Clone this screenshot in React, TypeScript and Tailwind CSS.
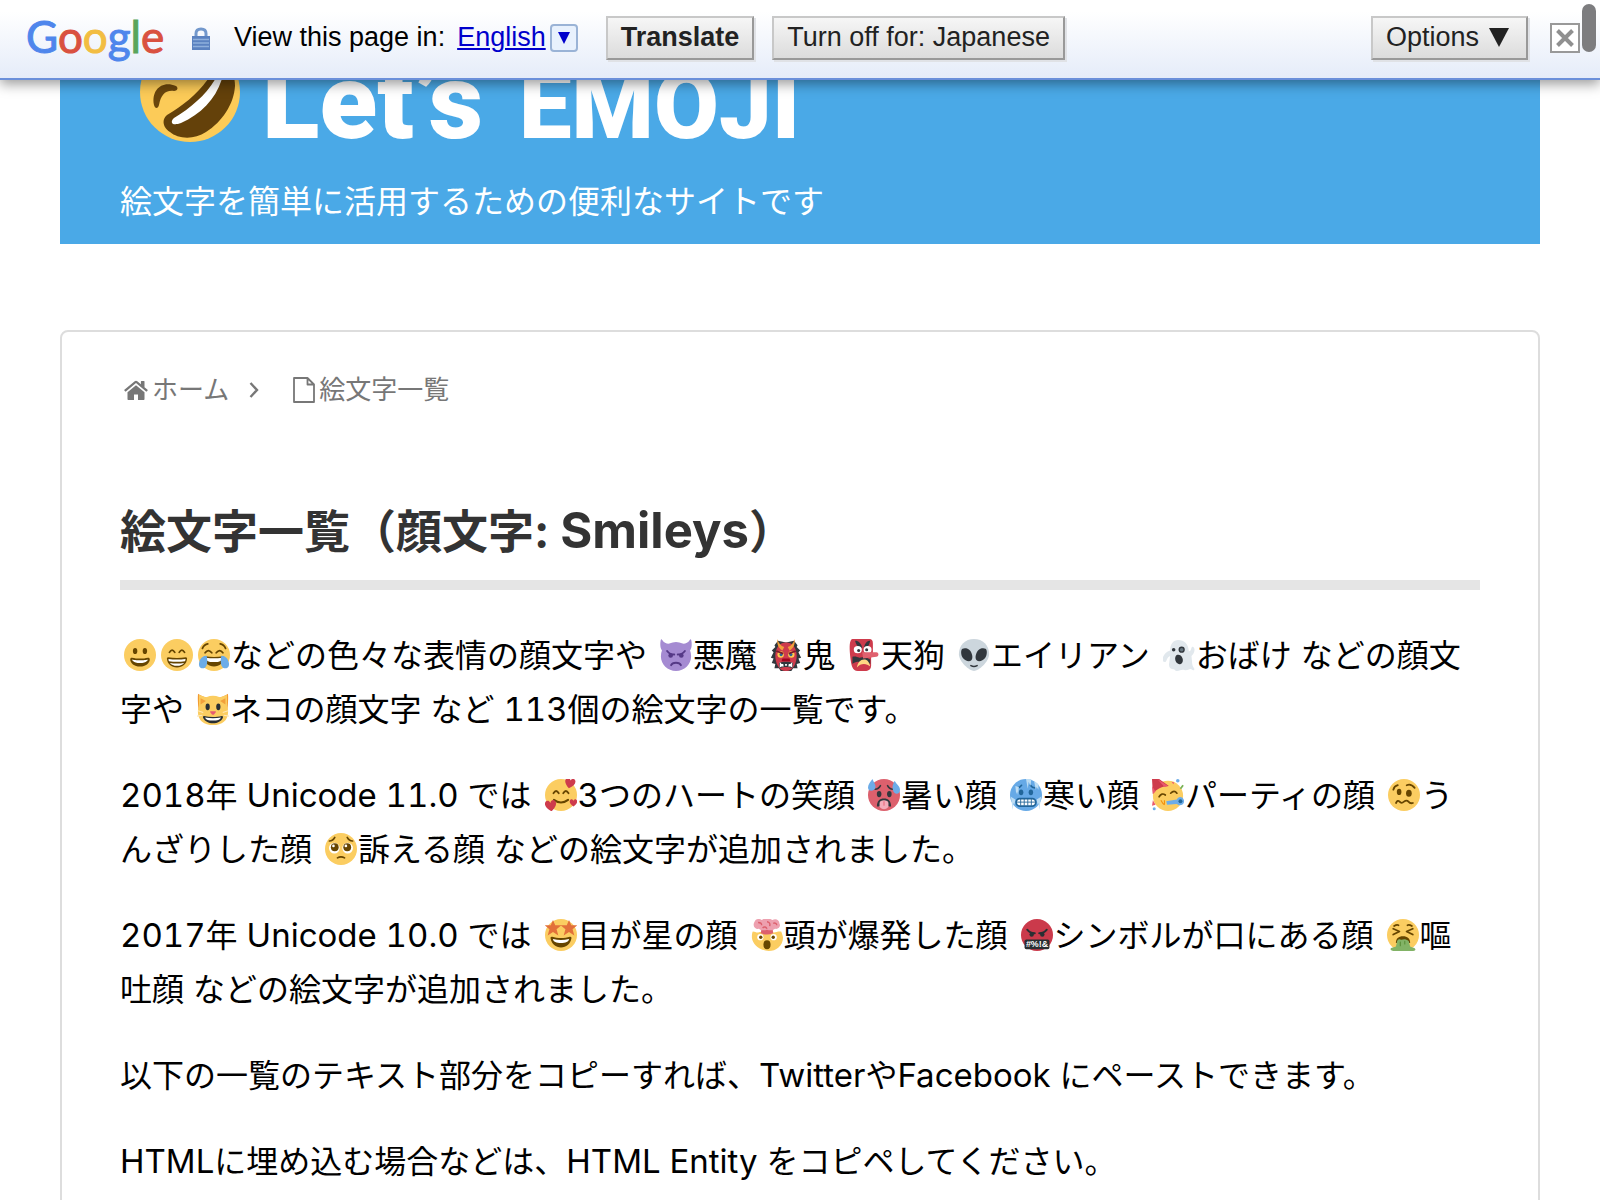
import type { ReactNode } from 'react';

function Emoji({ label, children }: { label: string; children: ReactNode }) {
  return (
    <svg viewBox="0 0 36 36" role="img" aria-label={label} className="ml-1 mr-px inline-block h-8 w-8 align-[-4px]">
      {children}
    </svg>
  );
}

function Latin({ children }: { children: ReactNode }) {
  return <span className="text-[33px] leading-none tabular-nums">{children}</span>;
}

const Y = '#FBCD61';
const B = '#664500';

const Disc = ({ fill = Y }: { fill?: string }) => <circle cx="18" cy="18" r="18" fill={fill} />;

const HappyEyes = ({ y = 14 }: { y?: number }) => (
  <g fill="none" stroke={B} strokeWidth="2" strokeLinecap="round">
    <path d={`M9.500 ${y + 2}q3-5 6 0`} />
    <path d={`M20.500 ${y + 2}q3-5 6 0`} />
  </g>
);

const Grinning = () => (
  <Emoji label="笑顔">
    <Disc />
    <ellipse cx="12.500" cy="13.500" rx="2.500" ry="3.500" fill={B} />
    <ellipse cx="23.500" cy="13.500" rx="2.500" ry="3.500" fill={B} />
    <path fill={B} d="M18 22c-3.600 0-6-.4-9-1-.7-.1-2 0-2 2 0 4 4.600 8 11 8s11-4 11-8c0-2-1.300-2.100-2-2-3 .6-5.400 1-9 1z" />
    <path fill="#fff" d="M9 23s3 1 9 1 9-1 9-1-1 4-9 4-9-4-9-4z" />
  </Emoji>
);

const Beaming = () => (
  <Emoji label="にやっと笑う顔">
    <Disc />
    <HappyEyes y={13} />
    <path fill={B} d="M28 20.500c-6 1-14 1-20 0-1 0-1.500.8-1.300 2C7.300 28 11.500 32 18 32s10.700-4 11.300-9.500c.2-1.200-.3-2-1.300-2z" />
    <path fill="#fff" d="M8.500 22.500c6 .8 13 .8 19 0 .3 1-.1 2-.6 2.500-6 .9-11.800.9-17.800 0-.5-.5-.9-1.500-.6-2.500zM10 27c5 .8 11 .8 16 0-1.600 2-4.400 3.200-8 3.200S11.600 29 10 27z" />
  </Emoji>
);

const Joy = () => (
  <Emoji label="嬉し泣きの顔">
    <Disc />
    <path fill="none" stroke={B} strokeWidth="2" strokeLinecap="round" d="M8 15.500q3.500-5 7.500 0M20.500 15.500q4-5 7.500 0M5 10.500q2-4.500 6-5M31 10.500q-2-4.500-6-5" />
    <path fill={B} d="M28 19.500c-6 1-14 1-20 0-1 0-1.500.8-1.300 2C7.300 27 11.500 31 18 31s10.700-4 11.300-9.500c.2-1.200-.3-2-1.300-2z" />
    <path fill="#fff" d="M9 21c6 1 12 1 18 0 .3 3-2 5-9 5s-9.300-2-9-5z" />
    <path fill="#6CACE8" d="M9.800 19C6 18.500 2 22 1.200 27c-.6 4 1.300 6 3.800 6 4.500 0 6.500-5 4.800-14zM26.200 19c3.800-.5 7.800 3 8.600 8 .6 4-1.300 6-3.800 6-4.500 0-6.500-5-4.800-14z" />
  </Emoji>
);

const Devil = () => (
  <Emoji label="悪魔">
    <path fill="#A58BD2" d="M35.300 2c-.2-1.600-1-2.200-1.800-1-2 3.200-5 4.500-8 4.200A18 18 0 0 0 10.500 5.200C7.500 5.500 4.500 4.200 2.500 1 1.700-.2.9.4.7 2-.2 7 .6 11 2.200 13A17 17 0 0 0 1 19.500C1 29 8.600 36 18 36s17-7 17-16.500a17 17 0 0 0-1.200-6.500c1.600-2 2.400-6 1.500-11z" />
    <path fill="none" stroke="#553986" strokeWidth="2.200" strokeLinecap="round" d="M8 13.500c2 2.500 5 4 8 4M28 13.500c-2 2.500-5 4-8 4M12.500 29.500c1.500-3.600 9.500-3.600 11 0" />
    <circle cx="12" cy="18.500" r="2.600" fill="#553986" />
    <circle cx="24" cy="18.500" r="2.600" fill="#553986" />
  </Emoji>
);

const Ogre = () => (
  <Emoji label="鬼">
    <path fill="#31373D" d="M9 2 5 7 6 9 2 13l2 2-3 6 3 1-2 5 4 1-1 5 5 0 2 3h12l2-3h5l-1-5 4-1-2-5 3-1-3-6 2-2-4-4 1-2-4-5-9 2z" />
    <path fill="#CE3B4C" d="M18 4C10 4 6 11 6 19c0 8 4 17 12 17s12-9 12-17c0-8-4-15-12-15z" />
    <path fill="#F2A03C" d="M8 0c0 6 1 10 6 13l2-4c-4-1-6-4-8-9zM28 0c0 6-1 10-6 13l-2-4c4-1 6-4 8-9z" />
    <circle cx="12" cy="17.500" r="3.600" fill="#FFCC4D" />
    <circle cx="24" cy="17.500" r="3.600" fill="#FFCC4D" />
    <circle cx="12.500" cy="17.500" r="1.800" fill="#2A6797" />
    <circle cx="23.500" cy="17.500" r="1.800" fill="#2A6797" />
    <path d="M7 13.500l8 3M29 13.500l-8 3" stroke="#7C1C2B" strokeWidth="2" />
    <path fill="#A0041E" d="M14 22h8l1 3H13z" />
    <path fill="#31373D" d="M10 27c4-2 12-2 16 0l-1 6c-4-2-10-2-14 0z" />
    <path fill="#fff" d="M11 32v-6l2 2h2v2h2v-2h2v2h2v-2h2l2-2v6l-2-1h-2l-1-1h-4l-1 1h-2z" />
  </Emoji>
);

const Tengu = () => (
  <Emoji label="天狗">
    <path fill="#CE3B4C" d="M5 0h19c3 0 4 2 4 5v11l-2 5v9c0 4-3 6-7 6H11C5 36 4 30 3 24 2 16 1 6 3 2c.5-1 1-2 2-2z" />
    <path fill="#31373D" d="M8 2c4 0 7 3 8 8-4 0-7-3-8-8zM25 2c-4 0-6 3-7 8 4 0 6-3 7-8zM5 20c3-1 5 0 8 1l6-1 6 3v5c-3-2-7-3-10 0-3-4-7-2-10 0z" />
    <ellipse cx="11" cy="12" rx="4.500" ry="4" fill="#fff" />
    <ellipse cx="22" cy="12" rx="4.500" ry="4" fill="#fff" />
    <circle cx="12" cy="13" r="1.700" fill="#31373D" />
    <circle cx="21" cy="12" r="1.700" fill="#31373D" />
    <path fill="#E0616F" d="M16 15l16 0c3 0 3 5 0 5l-15 2z" />
    <path fill="#FFD983" d="M10 32c1-6 4-9 8-9s6 3 7 8c-4-4-11-4-15 1z" />
  </Emoji>
);

const Alien = () => (
  <Emoji label="エイリアン">
    <path fill="#CCD6DD" d="M35 17c0 9-12 19-17 19S1 26 1 17C1 7 8 0 18 0s17 7 17 17z" />
    <path fill="#31373D" d="M13.500 13c3 4 3.500 9 1.500 11s-7 1-9.500-2.500S3 12 5 11s6-1 8.500 2zM22.500 13c-3 4-3.500 9-1.500 11s7 1 9.500-2.500S33 12 31 11s-6-1-8.500 2z" />
    <path d="M14.500 30q3.500 2 7 0" fill="none" stroke="#31373D" strokeWidth="1.800" strokeLinecap="round" />
  </Emoji>
);

const Ghost = () => (
  <Emoji label="おばけ">
    <path fill="#E1E8ED" d="M17 1c7 0 12 5 12 13l2-1c1-2 1-5 3-4 3 2 1 8-2 10 1 6 0 10 3 14 1 2-1 3-3 1-3-1-4 2-8 1-3-1-5 1-8 1s-2-2-5-2-5-3-4-7l1-8c-2 1-3 2-4 5-1 3-3 2-4 1-2-4 2-10 8-12C8 5 12 1 17 1z" />
    <circle cx="12" cy="12" r="2" fill="#31373D" />
    <circle cx="21" cy="12" r="3.500" fill="#31373D" />
    <circle cx="21" cy="12" r="2" fill="#66757F" />
    <ellipse cx="18" cy="23" rx="4.200" ry="5.500" fill="#31373D" transform="rotate(-20 18 23)" />
  </Emoji>
);

const Cat = () => (
  <Emoji label="ネコ">
    <path fill="#F18F26" d="M1.500 1C.5 0 1 16 2 19L14 6C9 5 4 3 1.500 1zM34.500 1C35.500 0 35 16 34 19L22 6c5-1 10-3 12.500-5z" />
    <path fill={Y} d="M18 3C8 3 1 10 1 21c0 10 7 15 17 15s17-5 17-15C35 10 28 3 18 3z" />
    <path fill={Y} d="M2 2v13L13 6zM34 2v13L23 6z" />
    <path fill="#F2A03C" d="M4 6v7l6-4zM32 6v7l-6-4z" />
    <ellipse cx="12" cy="15.500" rx="2.400" ry="3.800" fill="#292F33" />
    <ellipse cx="24" cy="15.500" rx="2.400" ry="3.800" fill="#292F33" />
    <path fill="#E75A70" d="M15 20.500h6c1 1-2 4-3 4s-4-3-3-4z" />
    <path fill="#292F33" d="M8 26c6 1.500 14 1.500 20 0 1.500 0 1.500 1 1 2-1.500 3.500-6 6-11 6S8.500 31.500 7 28c-.5-1-.5-2 1-2z" />
    <path fill="#fff" d="M9 27.500c6 1.200 12 1.200 18 0-1 2.500-4 3.500-9 3.500s-8-1-9-3.500z" />
    <path d="M1 20l6 2M0 26l6-1M35 20l-6 2M36 26l-6-1" stroke="#FEE7B8" strokeWidth="1.200" />
  </Emoji>
);

const Heart = ({ x, y, s }: { x: number; y: number; s: number }) => (
  <path transform={`translate(${x} ${y}) scale(${s})`} fill="#CE3B4C" d="M0 5C-4 2-6-1-5-3.500S-1-6 0-3C1-6 4-6 5-3.500S4 2 0 5z" />
);

const Hearts = () => (
  <Emoji label="3つのハートの笑顔">
    <Disc />
    <HappyEyes y={14} />
    <path fill="none" stroke={B} strokeWidth="2.200" strokeLinecap="round" d="M10 23.500q8 6 16 0" />
    <g transform="rotate(12 28 5)"><Heart x={28} y={5} s={1.1} /></g>
    <g transform="rotate(-8 6 30)"><Heart x={6.5} y={30.5} s={1.2} /></g>
    <Heart x={32} y={27} s={0.8} />
  </Emoji>
);

const Hot = () => (
  <Emoji label="暑い顔">
    <Disc fill="#DC606D" />
    <ellipse cx="12.500" cy="17" rx="2.600" ry="3.500" fill="#31373D" />
    <ellipse cx="24" cy="17" rx="2.600" ry="3.500" fill="#31373D" />
    <path fill="none" stroke="#31373D" strokeWidth="1.800" strokeLinecap="round" d="M8 11.500q4 0 6-4M28 11.500q-4 0-6-4" />
    <path fill="#31373D" d="M10 31c0-6 3-9 8-9s8 3 8 9c-3-1-13-1-16 0z" />
    <path fill="#F4ABBA" d="M13 27c0-4 10-4 10 0v4c-2 4-8 4-10 0z" />
    <path d="M18 25v5" stroke="#E75A70" strokeWidth="1" />
    <path fill="#6CACE8" d="M5 0C3 3 0 6 0 9.500 0 15 8 14 8.500 9 8.700 6 6 3 5 0zM30 2c-2 4-3 6-2 10 1 6 8 6 8 0 0-4-4-6-6-10z" />
  </Emoji>
);

const Cold = () => (
  <Emoji label="寒い顔">
    <Disc fill="#66A9E6" />
    <ellipse cx="12.500" cy="15" rx="2.500" ry="3.300" fill="#22669A" />
    <ellipse cx="23.500" cy="15" rx="2.500" ry="3.300" fill="#22669A" />
    <path fill="none" stroke="#22669A" strokeWidth="1.800" strokeLinecap="round" d="M8 10q3 0 5-3M28 10q-3 0-5-3" />
    <rect x="7" y="22" width="22" height="8.500" rx="4" fill="#fff" stroke="#22669A" strokeWidth="2" />
    <path d="M8 26h20M12 22v8M16 22v8M20 22v8M24 22v8" stroke="#22669A" strokeWidth="1" />
    <path fill="#BDDDF4" d="M18 0h6l-1 8-2-5-1 8zM27 2l5 4v6l-2-3-1 3zM6 8l4 1-1 9-1-4-1 3zM1 20l5 3-1 6-1-2-1 8-1-8zM35 20l-5 3 1 6 1-2 1 8 1-8z" />
  </Emoji>
);

const Party = () => (
  <Emoji label="パーティの顔">
    <circle cx="18" cy="19" r="17" fill={Y} />
    <path fill="#CE3B4C" d="M0 0h8l11 8C12 8 4 12 1 17z" />
    <path fill="#EA596E" d="M6 0l12 8-4 1zM0 8l4 6-3 3z" />
    <path fill="none" stroke={B} strokeWidth="1.900" strokeLinecap="round" d="M8 20q3-5 7-2M21 16q4-4 7 0" />
    <path d="M10 24q2 4 4 5M14 24v5" stroke="#F4900C" strokeWidth="1.200" fill="none" />
    <path fill="#6CACE8" d="M16 25l12-2c1-4 7-4 8 1s-5 7-8 4l-11 1z" />
    <circle cx="32" cy="25" r="2.200" fill="#226699" />
    <circle cx="29" cy="2" r="2" fill="#6CACE8" />
    <circle cx="2.500" cy="33.500" r="1.700" fill="#6CACE8" />
    <path d="M32 11l3-4" stroke="#77B255" strokeWidth="2" />
    <path fill="#EA596E" d="M22 3l3 1-1 2zM1 24l3 5-4 1z" />
  </Emoji>
);

const Woozy = () => (
  <Emoji label="うんざりした顔">
    <Disc />
    <ellipse cx="12.500" cy="14.500" rx="2.600" ry="3.500" fill={B} />
    <ellipse cx="23.500" cy="16" rx="3.200" ry="4" fill={B} />
    <path fill="none" stroke={B} strokeWidth="2" strokeLinecap="round" strokeLinejoin="round" d="M6 12q1-4 5-5M21 7q5-2 9 3M9 27q2-4 4-1.500t5 0 5 0 5 1.500" />
  </Emoji>
);

const Pleading = () => (
  <Emoji label="訴える顔">
    <Disc />
    <circle cx="10.500" cy="17" r="6" fill="#fff" />
    <circle cx="25.500" cy="17" r="6" fill="#fff" />
    <circle cx="11" cy="16" r="4.400" fill={B} />
    <circle cx="25" cy="16" r="4.400" fill={B} />
    <circle cx="9.500" cy="14.500" r="1.500" fill="#fff" />
    <circle cx="23.500" cy="14.500" r="1.500" fill="#fff" />
    <path fill="none" stroke={B} strokeWidth="1.900" strokeLinecap="round" d="M5 9q4 0 6-4M31 9q-4 0-6-4M14 28q4-2.500 8 0" />
  </Emoji>
);

const Star = ({ x, y }: { x: number; y: number }) => (
  <path transform={`translate(${x} ${y})`} fill="#E2703A" d="M0-9l2.500 6 7 0-5.500 4.500L6 8.500 0 4.500-6 8.500-4 1.500-9.500-3l7 0z" />
);

const StarStruck = () => (
  <Emoji label="目が星の顔">
    <Disc />
    <Star x={9} y={10} />
    <Star x={27} y={10} />
    <path fill={B} d="M8 20c6 2 14 2 20 0 1.500-.3 2 .8 1.700 2C28.500 28 24 32 18 32S7.500 28 6.300 22c-.3-1.200.2-2.300 1.700-2z" />
    <path fill="#fff" d="M9 22.500c6 1.500 12 1.500 18 0 0 3-4 4.500-9 4.500s-9-1.500-9-4.500z" />
  </Emoji>
);

const Exploding = () => (
  <Emoji label="頭が爆発した顔">
    <path fill={Y} d="M2 14c3 0 4 2 7 1s5 1 9 0 6 1 9 0 4-1 7-1c1 3 2 5 2 7 0 9-8 15-16 15S2 30 1 21c0-3 0-5 1-7z" />
    <path fill="#DC606D" d="M12 9h12l1 7c-5 2-9 2-14 0z" />
    <path fill="#EDA0AF" d="M4 3C5 0 9-1 12 1c3-2 9-2 12 0 4-2 8 0 8 4 2 3-1 7-5 6-3 2-6 2-9 1-3 1-7 1-9-1C5 12 1 8 4 3z" />
    <path fill="none" stroke="#DC606D" strokeWidth="1.600" d="M8 4c3 0 4 1 4 3M18 3c2 0 4 2 3 5M25 5c2-1 4 0 4 2M13 10c2-2 4-1 5 1" />
    <circle cx="10.500" cy="20.500" r="3.500" fill="#fff" />
    <circle cx="25.500" cy="20.500" r="3.500" fill="#fff" />
    <circle cx="11" cy="20.500" r="1.900" fill={B} />
    <circle cx="25" cy="20.500" r="1.900" fill={B} />
    <ellipse cx="18" cy="29" rx="4" ry="5" fill={B} />
  </Emoji>
);

const Cursing = () => (
  <Emoji label="シンボルが口にある顔">
    <Disc fill="#CB3A4B" />
    <path fill="none" stroke="#292F33" strokeWidth="2.200" strokeLinecap="round" d="M7 12c2 2.500 5 4 8.500 4M29 12c-2 2.500-5 4-8.500 4" />
    <circle cx="12" cy="17.500" r="2.500" fill="#292F33" />
    <circle cx="24" cy="17.500" r="2.500" fill="#292F33" />
    <rect x="4" y="23" width="28" height="11" rx="2" fill="#292F33" />
    <text x="18" y="32" textAnchor="middle" fontSize="10" fontWeight="700" fontFamily="Liberation Sans" fill="#fff">#%!&amp;</text>
  </Emoji>
);

const Vomiting = () => (
  <Emoji label="嘔吐顔">
    <Disc />
    <path fill="none" stroke={B} strokeWidth="2" strokeLinecap="round" strokeLinejoin="round" d="M7 11l7 3-7 3.500M29 11l-7 3 7 3.500M8 8q3-2 5-1M28 8q-3-2-5-1" />
    <path fill={B} d="M10 27c0-5 3-7.500 8-7.500s8 2.500 8 7.500z" />
    <path fill="#82B366" d="M11 27c0-3 2-5 4-4s4-1 6 0 4 1 4 4l1 4c1 1 5 1 6 3 0 2-2 2-4 2H9c-3 0-5-1-5-2 0-2 5-2 6-3z" />
    <path d="M15 26v4M20 25v3" stroke="#5C913B" strokeWidth="1.300" strokeLinecap="round" />
  </Emoji>
);

function TranslateBar() {
  const button =
    'flex h-11 items-center whitespace-nowrap border-2 border-t-[#c8c8c8] border-r-[#999] border-b-[#999] border-l-[#c8c8c8] bg-linear-to-b from-[#f6f6f6] to-[#dcdcdc] px-[13px] pb-0.5 text-[#222] shadow-[2px_2px_0_#e0e2e6]';
  return (
    <header className="relative z-10 border-b-2 border-[#6b90da] bg-linear-to-b from-white from-15% to-[#e5ecf9] font-['Liberation_Sans',Arial,sans-serif] text-[27px] leading-[30px] text-black shadow-[0_4px_12px_rgba(0,0,0,0.4)]">
      <div className="flex h-[78px] items-center pb-0.5 pr-5 pl-[26px]">
        <div aria-label="Google" className="w-[138px] pb-1 font-['Lato',sans-serif] text-[44px] leading-none whitespace-nowrap [-webkit-text-stroke:1px_currentColor]">
          <span className="text-[#4f86ec]">G</span>
          <span className="text-[#d95140]">o</span>
          <span className="text-[#f2bd42]">o</span>
          <span className="text-[#4f86ec]">g</span>
          <span className="text-[#58a55c]">l</span>
          <span className="text-[#d95140]">e</span>
        </div>
        <svg viewBox="0 0 18 23" className="ml-7 h-[23px] w-[18px] shrink-0" aria-hidden="true">
          <path d="M4 10V6.500C4 3.500 6 2 9 2s5 1.500 5 4.500V10" fill="none" stroke="#7398cc" strokeWidth="3" />
          <rect y="9" width="18" height="14" fill="#5b82c0" />
          <path d="M1 12.500h16M1 16h16M1 19.500h16" stroke="#8fb0dc" strokeWidth="1.500" />
        </svg>
        <span className="ml-6 pb-0.5 whitespace-nowrap">View this page in:</span>
        <a href="#language" className="ml-3 flex items-center text-[#0000cc]">
          <span className="pb-0.5 underline decoration-2 underline-offset-2">English</span>
          <span className="ml-1 flex h-7 w-7 items-center justify-center rounded-sm border-2 border-[#9ab3d6] bg-[#e8f1fd]">
            <svg viewBox="0 0 12 12" className="h-3 w-3" aria-hidden="true">
              <path d="M0 0h12L6 12z" fill="#0000cc" />
            </svg>
          </span>
        </a>
        <button className={`${button} ml-7 font-bold`}>Translate</button>
        <button className={`${button} ml-[18px]`}>Turn off for: Japanese</button>
        <button className={`${button} ml-auto gap-2.5`}>
          Options
          <svg viewBox="0 0 20 19" className="mr-1 h-[19px] w-5" aria-hidden="true">
            <path d="M0 0h20L10 19z" fill="#222" />
          </svg>
        </button>
        <button aria-label="Close" className="ml-[22px] flex h-[30px] w-[30px] items-center justify-center border-2 border-[#999] bg-white">
          <svg viewBox="0 0 18 18" className="h-[18px] w-[18px]" aria-hidden="true">
            <path d="M1.500 1.500l15 15M16.500 1.500l-15 15" stroke="#909090" strokeWidth="4" />
          </svg>
        </button>
      </div>
      <div className="absolute top-1 right-1 h-12 w-3.5 rounded-full bg-[#7d7d7f]" />
    </header>
  );
}

function Banner() {
  return (
    <div className="mx-[60px] bg-[#4aa9e7] px-[60px] pb-[15px] text-white">
      <div className="flex h-[95px] items-end overflow-hidden pb-[33px] pl-5">
        <svg viewBox="0 0 100 100" className="h-[100px] w-[100px] shrink-0" role="img" aria-label="笑い転げる顔">
          <circle cx="50" cy="50" r="50" fill="#fccb58" />
          <path d="M14 63C11 48 22 38 36 44c3 2 1 5-2 5-9-1-13 4-15 14-1 4-4 4-5 0z" fill="#6b460c" />
          <path d="M74 28C62 48 46 62 27 73c-5 4-5 12 3 17 8 7 24 8 36 0C82 80 94 62 95 44c0-18-12-26-21-16z" fill="#64410a" />
          <path d="M80 26C74 46 54 64 34 76c-5 5-1 8 7 5C64 71 80 52 84 28z" fill="#fff" />
        </svg>
        <div className="ml-[22px] flex items-baseline gap-9 font-['Roboto',sans-serif] font-black leading-[72px] whitespace-nowrap">
          <span className="text-[106px]">Let’s</span>
          <span className="text-[94px]">EMOJI</span>
        </div>
      </div>
      <p className="text-[32px] leading-[54px]">絵文字を簡単に活用するための便利なサイトです</p>
    </div>
  );
}

function Breadcrumb() {
  return (
    <nav aria-label="パンくず" className="flex items-center text-[26px] leading-10 text-[#777]">
      <a href="#home" className="flex items-center gap-1 pl-1">
        <svg viewBox="0 0 24 20" className="h-5 w-6" fill="currentColor" aria-hidden="true">
          <path d="M12 5.200 3.500 12.200V19c0 .6.400 1 1 1H10v-5.500h4V20h5.500c.6 0 1-.4 1-1v-6.800z" />
          <path d="M23.600 9.800 20.500 7.200V1.500c0-.3-.2-.5-.5-.5h-2.600c-.3 0-.5.2-.5.500v2.700L13.300 1.200a2 2 0 0 0-2.600 0L.4 9.800c-.2.200-.2.500 0 .7l.8.9c.2.200.5.200.7 0L12 3l10.100 8.400c.2.200.5.200.7 0l.8-.9c.2-.2.200-.5 0-.7z" />
        </svg>
        ホーム
      </a>
      <svg viewBox="0 0 10 16" className="ml-5 h-4 w-2.5" fill="none" stroke="currentColor" strokeWidth="2.400" aria-hidden="true">
        <path d="M1.500 1 8 8l-6.500 7" />
      </svg>
      <a href="#list" className="ml-[34px] flex items-center gap-1">
        <svg viewBox="0 0 22 26" className="h-[26px] w-[22px]" fill="none" stroke="currentColor" strokeWidth="1.800" strokeLinejoin="round" aria-hidden="true">
          <path d="M1 1h13.500L21 7.500V25H1zM14.500 1v6.500H21" />
        </svg>
        絵文字一覧
      </a>
    </nav>
  );
}

export default function App() {
  return (
    <div lang="ja" className="relative h-screen overflow-hidden bg-white font-['Inter','Noto_Sans_CJK_JP',sans-serif] text-black">
      <TranslateBar />
      <Banner />
      <main className="mx-[60px] mt-[86px] rounded-lg border-2 border-[#ddd] px-[58px] pt-[38px] pb-16">
        <Breadcrumb />
        <h1 className="mt-[86px] border-b-[10px] border-[#e5e5e5] pb-[14px] text-[46px] leading-[70px] font-bold text-[#333]">
          絵文字一覧（顔文字: <span className="text-[49px] leading-none">Smileys</span>）
        </h1>
        <div className="mt-[39px] flex flex-col gap-8 pr-2 text-[32px] leading-[54px]">
          <p>
            <Grinning /><Beaming /><Joy />などの色々な表情の顔文字や <Devil />悪魔 <Ogre />鬼 <Tengu />天狗 <Alien />エイリアン <Ghost />おばけ などの顔文字や <Cat />ネコの顔文字 など <Latin>113</Latin>個の絵文字の一覧です。
          </p>
          <p>
            <Latin>2018</Latin>年 <Latin>Unicode 11.0 </Latin>では <Hearts /><Latin>3</Latin>つのハートの笑顔 <Hot />暑い顔 <Cold />寒い顔 <Party />パーティの顔 <Woozy />うんざりした顔 <Pleading />訴える顔 などの絵文字が追加されました。
          </p>
          <p>
            <Latin>2017</Latin>年 <Latin>Unicode 10.0 </Latin>では <StarStruck />目が星の顔 <Exploding />頭が爆発した顔 <Cursing />シンボルが口にある顔 <Vomiting />嘔吐顔 などの絵文字が追加されました。
          </p>
          <p>以下の一覧のテキスト部分をコピーすれば、<Latin>Twitter</Latin>や<Latin>Facebook </Latin>にペーストできます。</p>
          <p><Latin>HTML</Latin>に埋め込む場合などは、<Latin>HTML Entity </Latin>をコピペしてください。</p>
        </div>
      </main>
    </div>
  );
}
